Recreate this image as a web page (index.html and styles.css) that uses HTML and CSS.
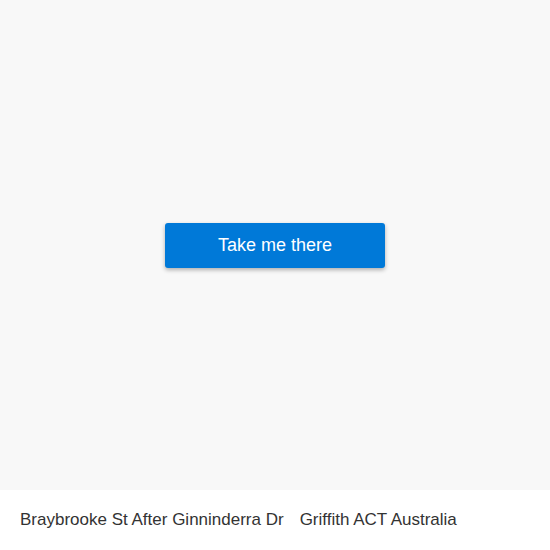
FILE: index.html
```html
<!DOCTYPE html>
<html>
<head>
<meta charset="utf-8">
<link rel="stylesheet" href="styles.css">
</head>
<body>
<div class="page">
  <main class="map">
    <button class="go">Take me there</button>
  </main>
  <footer class="stop">
    <span class="stop-name">Braybrooke St After Ginninderra Dr</span>
    <span class="stop-area">Griffith ACT Australia</span>
  </footer>
</div>
</body>
</html>
```
FILE: styles.css
```css
html, body {
  margin: 0;
  padding: 0;
  background: #ffffff;
  font-family: "Liberation Sans", Arial, sans-serif;
}
.page {
  width: 550px;
  height: 550px;
  display: flex;
  flex-direction: column;
}
.map {
  height: 490px;
  background: #f8f8f8;
  display: flex;
  align-items: center;
  justify-content: center;
}
.go {
  width: 220px;
  height: 45px;
  margin-top: 1px;
  border: none;
  border-radius: 3px;
  background: #0079d8;
  color: #ffffff;
  font-family: "Liberation Sans", Arial, sans-serif;
  font-size: 18px;
  box-shadow: 0 2px 4px rgba(0, 0, 0, 0.3);
  cursor: pointer;
}
.stop {
  flex: 1;
  display: flex;
  align-items: center;
  gap: 16px;
  padding: 0 20px;
  font-size: 17px;
  color: #333333;
}
```
